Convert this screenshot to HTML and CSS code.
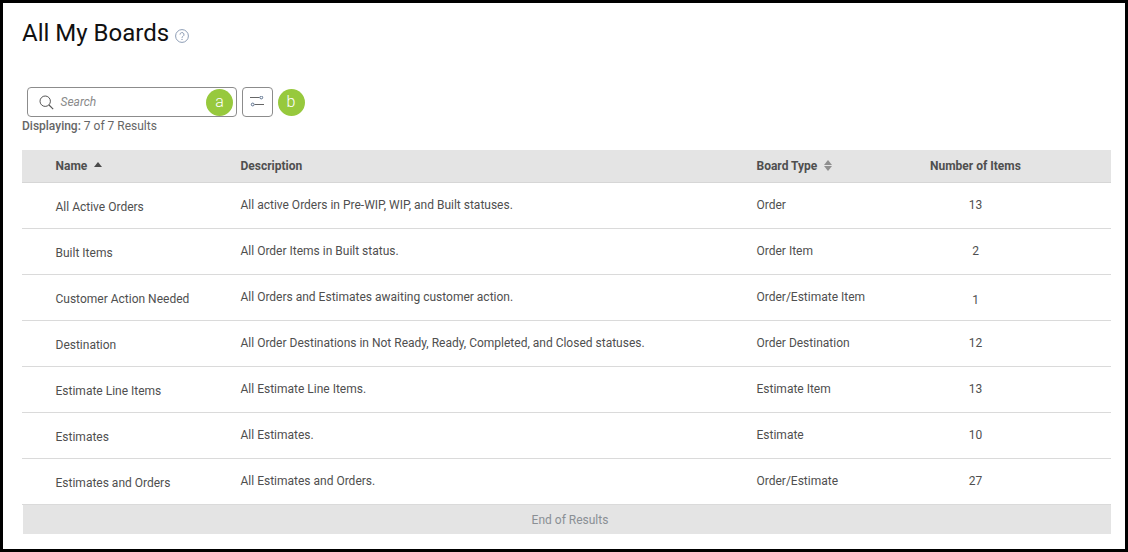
FILE: index.html
```html
<!DOCTYPE html>
<html lang="en">
<head>
<meta charset="utf-8">
<title>All My Boards</title>
<link rel="stylesheet" href="styles.css">
</head>
<body>
<div class="frame">
  <div class="title-row">
    <h1 class="title">All My Boards</h1>
    <svg class="help" width="14" height="14" viewBox="0 0 14 14" fill="none"><circle cx="7" cy="7" r="6.400" stroke="#8d9db5"/><path d="M5 5.600a2 2 0 1 1 3 1.700c-.7.400-1 .8-1 1.500" stroke="#8d9db5" stroke-width="1"/><circle cx="7" cy="10.400" r=".7" fill="#8d9db5"/></svg>
  </div>
  <div class="tools">
    <div class="search">
      <svg class="search-icon" width="15" height="15" viewBox="0 0 15 15" fill="none"><circle cx="6.200" cy="6.200" r="5.200" stroke="#555" stroke-width="1"/><path d="M10 10l4.200 4.200" stroke="#555" stroke-width="1.100"/></svg>
      <span class="placeholder">Search</span>
      <span class="badge">a</span>
    </div>
    <button class="filter" type="button" aria-label="Filter">
      <svg class="filter-icon" width="14" height="11" viewBox="0 0 14 11" fill="none"><path d="M0 1.500h9.500M4.500 8.500H14" stroke="#666" stroke-width="1"/><circle cx="11.300" cy="1.500" r="1.400" stroke="#5a6f8c"/><circle cx="2.700" cy="8.500" r="1.400" stroke="#5a6f8c"/></svg>
    </button>
    <span class="badge">b</span>
  </div>
  <div class="count"><b>Displaying:</b> 7 of 7 Results</div>
  <table class="boards">
    <thead>
      <tr>
        <th class="c-name">Name <span class="sort-up"></span></th>
        <th class="c-desc">Description</th>
        <th class="c-type">Board Type <span class="sort-both"><i class="up"></i><i class="down"></i></span></th>
        <th class="c-num">Number of Items</th>
      </tr>
    </thead>
    <tbody>
      <tr><td class="name"><span>All Active Orders</span></td><td>All active Orders in Pre-WIP, WIP, and Built statuses.</td><td>Order</td><td class="num">13</td></tr>
      <tr><td class="name"><span>Built Items</span></td><td>All Order Items in Built status.</td><td>Order Item</td><td class="num">2</td></tr>
      <tr><td class="name"><span>Customer Action Needed</span></td><td>All Orders and Estimates awaiting customer action.</td><td>Order/Estimate Item</td><td class="num low">1</td></tr>
      <tr><td class="name"><span>Destination</span></td><td>All Order Destinations in Not Ready, Ready, Completed, and Closed statuses.</td><td>Order Destination</td><td class="num">12</td></tr>
      <tr><td class="name"><span>Estimate Line Items</span></td><td>All Estimate Line Items.</td><td>Estimate Item</td><td class="num">13</td></tr>
      <tr><td class="name"><span>Estimates</span></td><td>All Estimates.</td><td>Estimate</td><td class="num">10</td></tr>
      <tr><td class="name"><span>Estimates and Orders</span></td><td>All Estimates and Orders.</td><td>Order/Estimate</td><td class="num">27</td></tr>
    </tbody>
  </table>
  <div class="end">End of Results</div>
</div>
</body>
</html>
```
FILE: styles.css
```css
* { box-sizing: border-box; }
html, body { margin: 0; padding: 0; }
body { font-family: Roboto, "Liberation Sans", sans-serif; background: #fff; color: #4a4a4a; }
.frame {
  width: 1128px;
  height: 552px;
  border: 3px solid #000;
  padding: 0 14px 0 19px;
  overflow: hidden;
}
.title-row { display: flex; align-items: center; height: 60px; padding-bottom: 1px; }
.title { margin: 0; font-size: 24px; font-weight: 400; color: #111; line-height: 60px; }
.help { margin: 6px 0 0 6px; }
.tools { display: flex; align-items: center; height: 32px; margin: 23px 0 0 5px; }
.search {
  width: 210px;
  height: 30px;
  border: 1px solid #8c8c8c;
  border-radius: 4px;
  display: flex;
  align-items: center;
  padding: 0 3px 0 11px;
}
.search-icon { flex: none; }
.placeholder { margin-left: 6.500px; font-size: 12px; font-style: italic; color: #8a8a8a; flex: 1; }
.badge {
  flex: none;
  width: 27px;
  height: 27px;
  border-radius: 50%;
  background: #97c93d;
  color: #fff;
  font-size: 16px;
  font-weight: 300;
  line-height: 26px;
  text-align: center;
}
.filter {
  width: 31px;
  height: 30px;
  margin: 0 4.500px 0 5px;
  padding: 0;
  border: 1px solid #8c8c8c;
  border-radius: 4px;
  background: #fff;
  display: flex;
  align-items: center;
  justify-content: center;
}
.filter-icon { margin: 0 1px 1px 0; }
.count { font-size: 12px; line-height: 14px; color: #666; margin-top: 1px; }
.count b { font-weight: 500; }
.boards {
  width: 1089px;
  margin-top: 17px;
  border-collapse: separate;
  border-spacing: 0;
  table-layout: fixed;
  font-size: 12px;
}
.boards th {
  height: 33px;
  padding: 0 0 1px 0;
  background: #e4e4e4;
  border-bottom: 1px solid #d6d6d6;
  text-align: left;
  font-weight: 700;
  line-height: 14px;
  color: #4f4f4f;
}
.boards td {
  height: 46px;
  padding: 0 0 1px 0;
  border-bottom: 1px solid #dadada;
  color: #4f4f4f;
}
.boards th.c-name { width: 218.500px; padding-left: 33.500px; }
.c-desc { width: 516px; }
.c-type { width: 173.500px; }
.c-num { width: 181px; }
.boards td.name { padding: 3px 0 0 33.500px; }
.boards td.num { text-align: center; padding-right: 90px; }
.boards td.low { padding-top: 5px; padding-bottom: 0; }
.sort-up, .up, .down {
  display: inline-block;
  width: 0;
  height: 0;
  border-left: 4.500px solid transparent;
  border-right: 4.500px solid transparent;
}
.sort-up { border-bottom: 5px solid #4a4a4a; margin: 0 0 3px 4px; }
.sort-both { display: inline-flex; flex-direction: column; gap: 1px; height: 11px; margin: -2px 0 0 4px; vertical-align: middle; }
.up { border-bottom: 5px solid #8f8f8f; }
.down { border-top: 5px solid #8f8f8f; }
.end {
  width: 1088px;
  height: 29px;
  margin-left: 1px;
  padding-left: 6px;
  background: #e4e4e4;
  text-align: center;
  font-size: 12px;
  line-height: 30px;
  color: #8a8f94;
}
```
